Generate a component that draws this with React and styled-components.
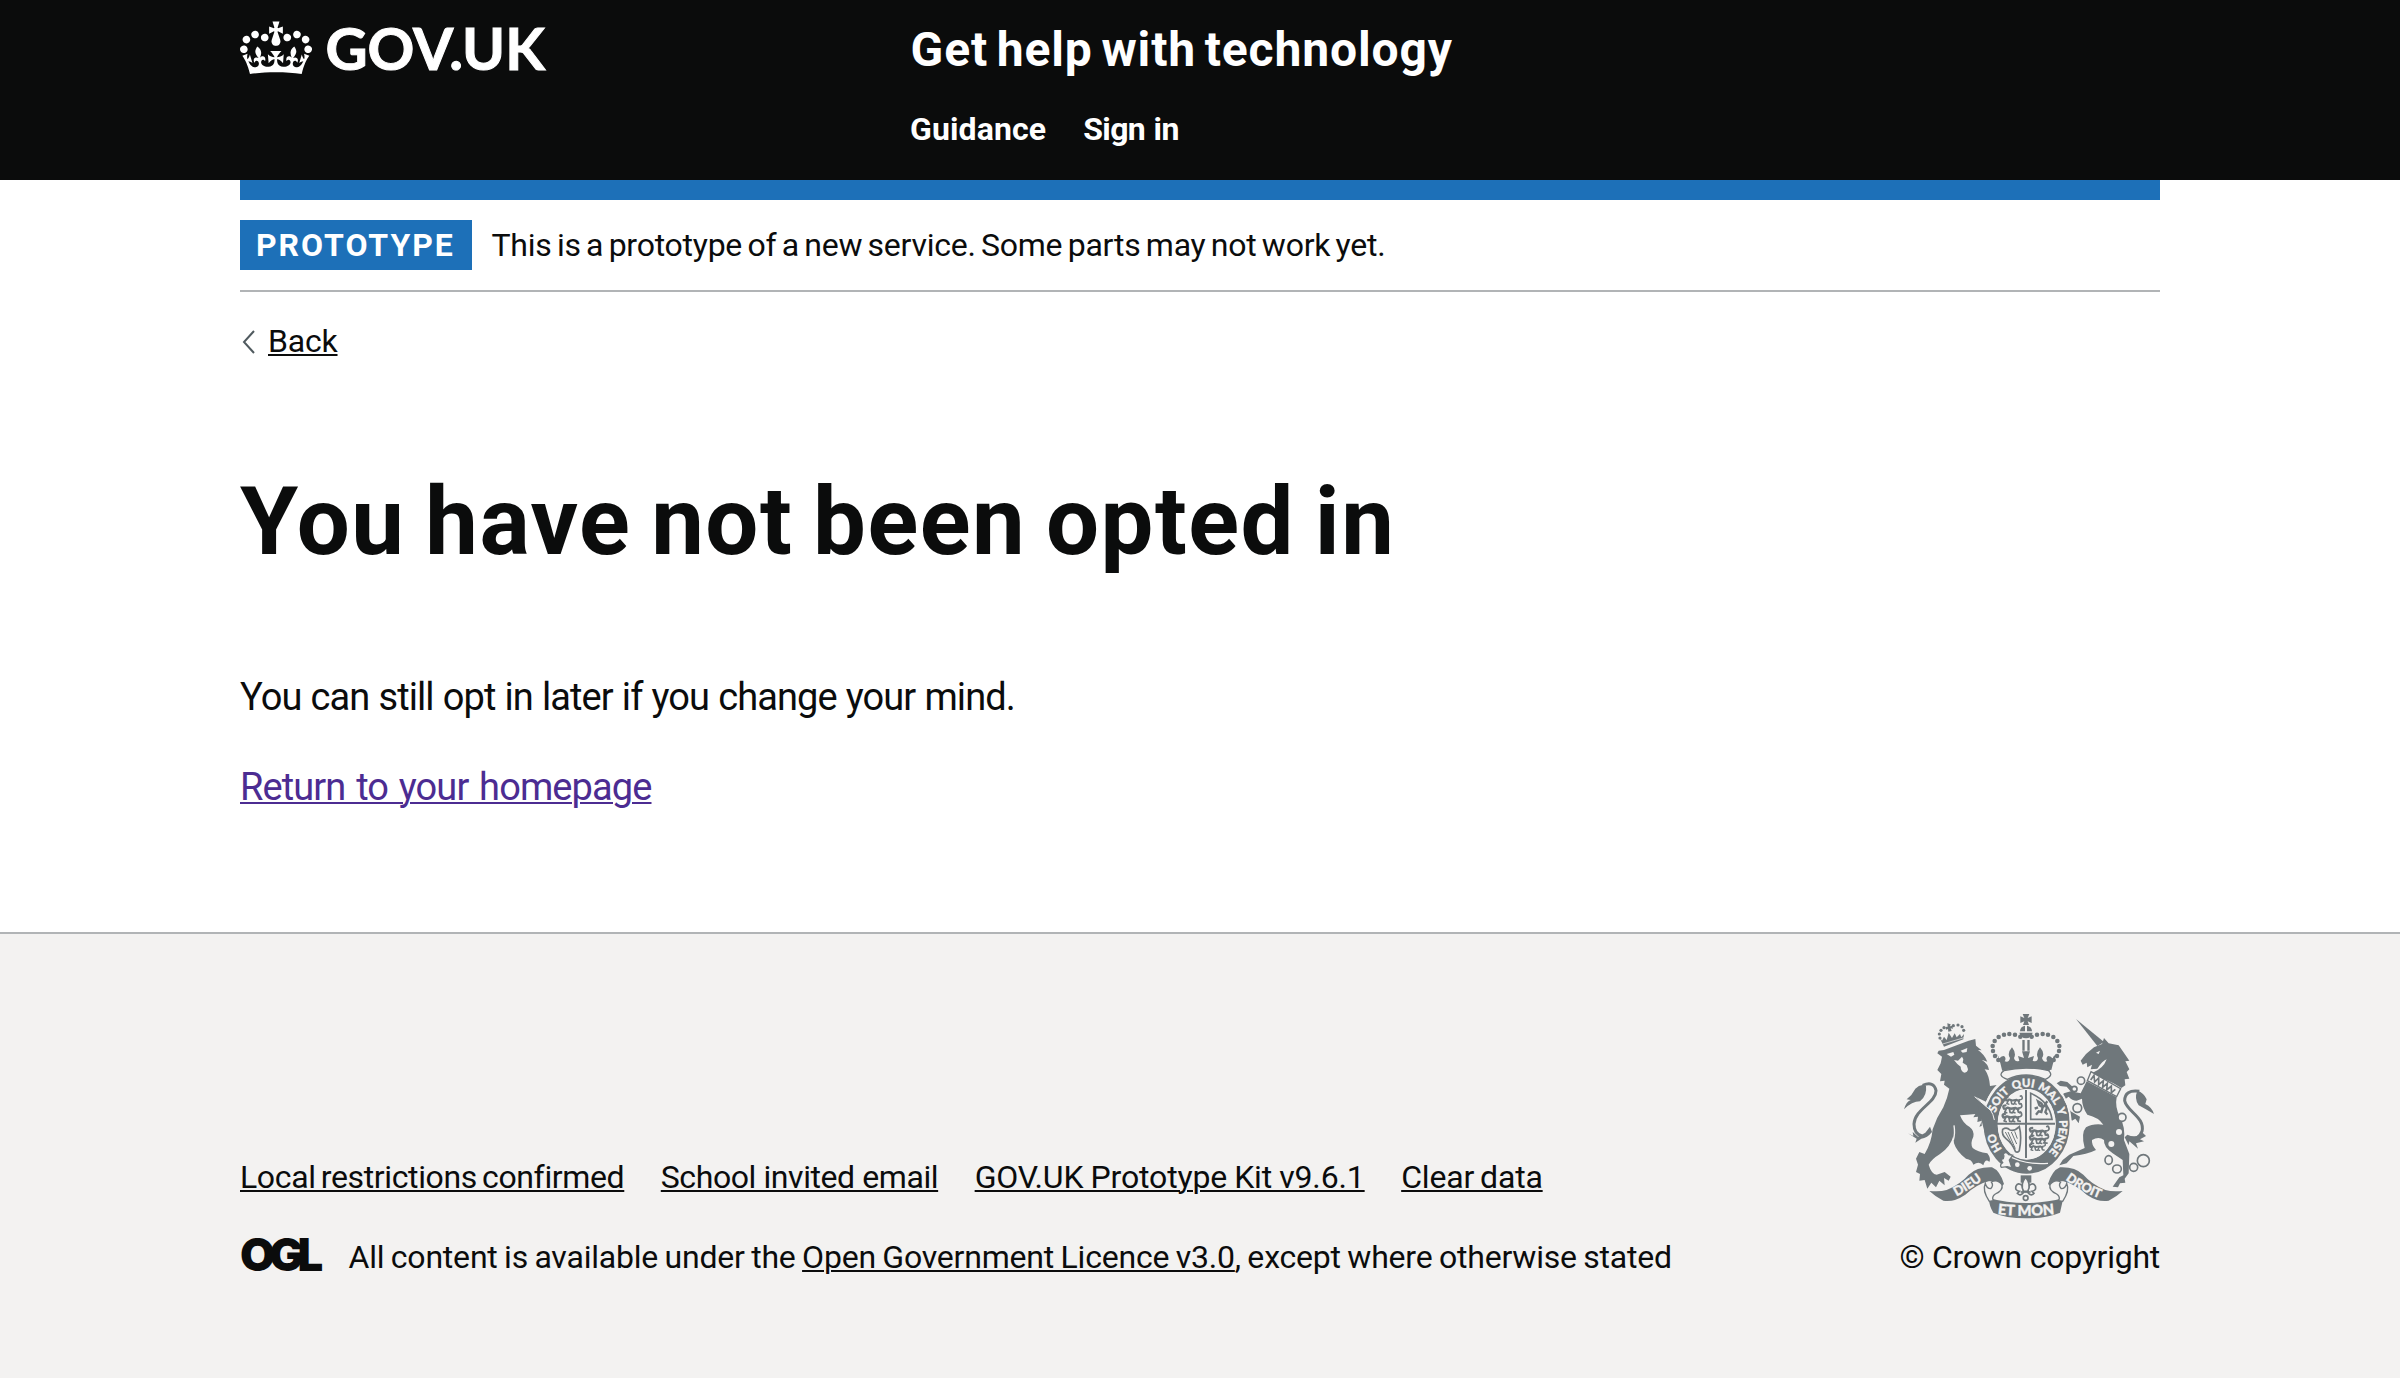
import React from "react";
import styled, { createGlobalStyle } from "styled-components";

const ink = "#0b0c0c";
const blue = "#1d70b8";
const rule = "#b1b4b6";
const paper = "#f3f2f1";
const crest = "#6f777b";

const GlobalStyle = createGlobalStyle`
  * { box-sizing: border-box; }
  body { margin: 0; background: #fff; color: ${ink}; font-family: Roboto, "Liberation Sans", sans-serif; }
  h1, p, ul { margin: 0; padding: 0; }
  ul { list-style: none; }
  a { color: inherit; }
`;

const Page = styled.div`
  min-height: 1378px;
  display: flex;
  flex-direction: column;
`;

const Container = styled.div`
  width: 1920px;
  margin: 0 auto;
`;

const Header = styled.header`
  background: ${ink};
  color: #fff;
  height: 180px;
`;

const HeaderRow = styled(Container)`
  display: grid;
  grid-template-columns: 670px 1fr;
`;

const HeaderRule = styled(Container)`
  height: 20px;
  background: ${blue};
`;

const Logo = styled.a`
  display: flex;
  align-items: flex-start;
  padding-top: 18px;
  text-decoration: none;
`;

const Crown = styled.svg`
  display: block;
  width: 72px;
  height: 60px;
`;

const LogoText = styled.span`
  margin-left: 13.5px;
  font: 700 58px/70px Lato, "Liberation Sans", sans-serif;
  letter-spacing: 0;
  -webkit-text-stroke: 1px currentColor;
  margin-top: -5px;
`;

const HeaderContent = styled.div`
  padding-top: 20px;
`;

const ServiceName = styled.a`
  display: block;
  font-size: 48px;
  font-weight: 700;
  line-height: 60px;
  letter-spacing: 0.85px;
  word-spacing: -4px;
  padding-left: 0.6px;
  text-decoration: none;
`;

const Nav = styled.ul`
  display: flex;
  gap: 37px;
  margin-top: 29px;
  font-size: 32px;
  font-weight: 700;
  line-height: 40px;
`;

const NavLink = styled.a`
  text-decoration: none;
  letter-spacing: ${(p) => p.$tracking}px;
  word-spacing: ${(p) => p.$gap || 0}px;
`;

const Banner = styled(Container)`
  display: flex;
  align-items: center;
  padding: 20px 0;
  border-bottom: 2px solid ${rule};
`;

const Tag = styled.strong`
  width: 232px;
  padding: 5px 0 5px 16px;
  background: ${blue};
  color: #fff;
  font-size: 32px;
  line-height: 40px;
  letter-spacing: 1.96px;
`;

const BannerText = styled.span`
  margin-left: 19.5px;
  font-size: 32px;
  line-height: 50px;
  letter-spacing: -0.25px;
  word-spacing: -2.3px;
`;

const BackLink = styled.a`
  display: inline-flex;
  align-items: center;
  margin-top: 29px;
  font-size: 32px;
  line-height: 40px;
  letter-spacing: -0.2px;
  text-decoration: none;

  span {
    margin-left: 12px;
    text-decoration: underline;
    text-decoration-thickness: 2px;
    text-underline-offset: 2px;
  }
`;

const Chevron = styled.svg`
  width: 16px;
  height: 26px;
  margin-top: 2px;
`;

const Title = styled.h1`
  margin-top: 109px;
  font-size: 94px;
  font-weight: 700;
  line-height: 104px;
  letter-spacing: 1.5px;
  word-spacing: -5px;
`;

const Body = styled.p`
  margin-top: ${(p) => p.$top}px;
  font-size: 38px;
  line-height: 50px;
  letter-spacing: ${(p) => p.$tracking}px;
  word-spacing: ${(p) => p.$gap}px;
`;

const TextLink = styled.a`
  color: ${(p) => p.$color || ink};
  text-decoration: underline;
  text-decoration-thickness: 2px;
  text-underline-offset: 2px;
`;

const Footer = styled.footer`
  flex: 1;
  margin-top: 120px;
  padding-top: 79px;
  background: ${paper};
  border-top: 2px solid ${rule};
`;

const FooterRow = styled(Container)`
  display: flex;
  align-items: flex-end;
  justify-content: space-between;
  font-size: 32px;
  line-height: 40px;
`;

const FooterLinks = styled.ul`
  display: flex;
  gap: 36.5px;
  margin-bottom: 40px;
`;

const FooterItem = styled.li`
  letter-spacing: ${(p) => p.$tracking}px;
  word-spacing: ${(p) => p.$gap}px;
  white-space: nowrap;
`;

const Licence = styled.div`
  display: flex;
  align-items: center;
  letter-spacing: -0.2px;
  word-spacing: -1.3px;
`;

const LicenceMark = styled.span`
  width: 108.5px;
  margin: -2px 0 2px;
  font: 900 45.5px/36px Inter, "Liberation Sans", sans-serif;
  letter-spacing: -6px;
`;

const Copyright = styled.a`
  display: flex;
  flex-direction: column;
  align-items: center;
  gap: 16px;
  text-decoration: none;
  letter-spacing: -0.26px;
`;

const Crest = styled.svg`
  display: block;
  width: 250px;
  height: 208px;
  overflow: visible;
`;

const beads = [[391, 110], [375, 104], [358, 102], [342, 104], [326, 111], [314, 123], [308, 138], [309, 153], [315, 168], [325, 180]];
const lionCrownBeads = [[150, 114], [148, 102], [153, 91], [162, 83], [190, 77], [204, 75], [216, 80], [221, 91]];

function PassantLion({ x, y, s = 1 }) {
  return (
    <g transform={`translate(${x} ${y}) scale(${s})`} fill="none" stroke={crest} strokeWidth="5" strokeLinecap="round" strokeLinejoin="round">
      <path d="M4 8q-6-10 4-10M8 8l6-3 10 3 14-2 8 4" strokeWidth="7" />
      <path d="M10 10l-4 8 6 2M20 10l2 9 6 1M34 10l-4 8 6 2M44 10l2 8 6 1M46 6q12 0 10-8t-6-4" />
    </g>
  );
}

function RoyalArms() {
  return (
    <Crest viewBox="45 39 750 624" role="img">
      <g fill={crest}>
        {/* lion */}
        <path d="M142 160L146 152 162 150 236 122 256 117 258 137 275 151 264 150Q284 164 292 185L275 179Q295 192 297 210L284 208Q298 228 300 258L320 255Q300 275 288 305L256 290 302 332Q312 350 314 372L322 392 314 400 306 384 302 404 294 388 284 398 282 376 268 380 276 362 262 366 264 350 250 352 256 342Q230 344 210 346 220 372 238 380 254 392 250 410 240 430 248 444 262 456 292 460 304 476 298 486 286 474 280 496 268 482 250 494 246 478 228 476Q200 456 192 430L190 408Q182 440 150 462 124 478 116 494 124 522 140 524L164 516 182 530 176 542 162 534 164 556 148 542 138 562 124 548 112 566 104 540 88 542 90 522 78 516 84 494 78 476 88 456 104 462Q124 430 128 388 140 352 160 322 172 296 178 266L162 254 164 242 150 244 154 222 142 210 152 190 156 170Z" />
        <path d="M42 328Q48 306 62 300L50 298Q66 286 76 266 92 250 108 258 112 286 90 304 66 304 42 328Z" />
        <path d="M54 400L70 408 68 396 84 410 106 398 120 380 126 396Q112 414 94 416L76 428 80 416Z" />
      </g>
      <path d="M98 256Q132 242 138 272C138 308 74 328 72 372Q72 402 96 408" fill="none" stroke={crest} strokeWidth="9" />
      <g fill={paper}>
        <path d="M170 162l20-6 3 8-10 6zM212 152l20-8-2 12-12 2z" />
        <path d="M192 180l12 2 12-12 4 8-2 10 12 8 4 12q-2 10-10 10-12-4-12-18l-10-8z" />
      </g>
      <path d="M192 376Q196 400 190 420" fill="none" stroke={paper} strokeWidth="4" />
      {/* lion's crown */}
      <g fill={crest}>
        {lionCrownBeads.map(([x, y]) => <circle key={y + x} cx={x} cy={y} r="4.8" />)}
        <path d="M172 70l10 3-2 6 7-2 2 9-7-1 3 8-10 2-1-8-6 2-2-8 7-1z" />
        <path d="M148 112l8 10 6-12 8 10 6-22 10 16 8-14 6 12 10-10 4 10 8-10-2 16-58 22z" />
      </g>
      <path d="M158 132l68-20" stroke={paper} strokeWidth="2" />

      {/* unicorn */}
      <g fill={crest}>
        <path d="M558 57L642 126 622 138Z" />
        <path d="M572 182L588 162 612 142 636 132 642 114 656 130 686 136 700 156 718 182 706 184 718 208 710 216 718 236 704 238 706 256 694 264 670 250 654 242 626 232 608 218Q640 206 650 178 636 184 622 206L602 208 606 194 592 202 590 188 578 194Z" />
        <path d="M590 244L680 292Q674 320 690 352 706 380 702 420L718 462 716 520 704 536 706 548 690 550 684 562 668 560 688 532 700 526 698 480 668 460Q640 440 642 420 626 408 606 420 604 434 618 450 590 464 550 468L530 490 508 496 518 480 538 464 584 444Q572 400 588 382 608 370 640 374 626 352 592 344 576 320 576 296L560 302Q546 302 536 290L522 300 542 334 570 350 566 370 556 356 546 362 530 344 514 310 504 296 522 280 542 274 572 280Z" />
        <path d="M552 286L530 260 510 258 500 250 512 242 532 246 556 268Z" />
        <path d="M792 342Q768 328 746 316 732 296 742 272 762 278 770 298L766 312Q786 322 792 342Z" />
        <path d="M704 412L716 436 718 424 744 446 738 430 762 424 750 418 768 408 758 398Q738 416 712 404Z" />
      </g>
      <path d="M748 274Q704 268 704 302C710 334 766 352 756 394Q748 416 724 418" fill="none" stroke={crest} strokeWidth="9" />
      <path d="M618 158l12-6-4 10z" fill={paper} />
      <path d="M603 215L692 266 680 290 592 242Z" fill={paper} stroke={crest} strokeWidth="4" />
      <path d="M602 240l10-14 2 20 12-12 0 20 14-12-2 20 14-12-2 20 14-12 0 20 12-10" fill="none" stroke={crest} strokeWidth="5" />
      <g fill="none" stroke={crest} strokeWidth="5">
        <circle cx="573" cy="242" r="11" />
        <circle cx="553" cy="267" r="8" fill={paper} />
        <circle cx="562" cy="324" r="13" fill={paper} />
        <circle cx="696" cy="352" r="12" fill={paper} />
        <ellipse cx="656" cy="480" rx="11" ry="13" />
        <ellipse cx="681" cy="507" rx="13" ry="12" />
        <circle cx="731" cy="502" r="12" />
        <circle cx="760" cy="482" r="18" />
      </g>
      <circle cx="687" cy="396" r="9" fill={paper} />
      <circle cx="664" cy="432" r="9" fill={paper} />

      {/* garter */}
      <ellipse cx="410" cy="373" rx="132" ry="152" fill="none" stroke={paper} strokeWidth="6" />
      <ellipse cx="410" cy="373" rx="108" ry="127" fill="none" stroke={crest} strokeWidth="42" />
      <ellipse cx="410" cy="373" rx="87" ry="105" fill={paper} />
      <path id="garter" d="M410 485A98 112 0 0 1 410 261 98 112 0 0 1 410 485" fill="none" />
      <g fill={paper} stroke={paper} strokeWidth="1" fontFamily="Lato, sans-serif" fontWeight="900" fontSize="34" textAnchor="middle">
        <text><textPath href="#garter" startOffset="17%">HO</textPath></text>
        <text><textPath href="#garter" startOffset="36%">SOIT</textPath></text>
        <text><textPath href="#garter" startOffset="48.5%">QUI</textPath></text>
        <text><textPath href="#garter" startOffset="60.5%">MAL</textPath></text>
        <text><textPath href="#garter" startOffset="69.5%">Y</textPath></text>
        <text><textPath href="#garter" startOffset="81%">PENSE</textPath></text>
      </g>
      <path d="M256 290L302 332Q314 350 314 372L324 394 314 402 306 386 302 406 294 390 284 398 272 350Z" fill={crest} />
      <path d="M254 290L302 331Q310 342 313 360" fill="none" stroke={paper} strokeWidth="3" />

      {/* shield */}
      <g fill="none" stroke={crest}>
        <path d="M408 270V474M321 371H495" strokeWidth="6" />
        <path d="M422 280V358H486Q478 304 422 280Z" strokeWidth="5" />
        <path d="M438 344l8-10 8 2 4-14-10-6-4-12 10 6 6 10 8-6 2 12-4 10 6 8M444 322l-10 4M464 314l8-10" strokeWidth="7" />
        <path d="M338 388q12-8 22 2 14 4 28-10 8 30 0 72-6 8-12 2-8-22-28-38-14-12-10-28z" strokeWidth="5" />
        <path d="M354 396l22 50M364 396l16 36M374 394l8 22M346 396l28 52" strokeWidth="3" />
      </g>
      <PassantLion x={345} y={294} s={0.92} />
      <PassantLion x={338} y={318} s={1.02} />
      <PassantLion x={336} y={344} s={1.05} />
      <PassantLion x={418} y={386} s={1.05} />
      <PassantLion x={418} y={410} s={1.02} />
      <PassantLion x={418} y={434} s={0.85} />

      {/* buckle and strap */}
      <path d="M346 462Q400 496 474 490" fill="none" stroke={paper} strokeWidth="4" />
      <path d="M340 462q8-10 16 2l12 2-10 14 8 24-14-4-18 2q-6-8 4-14-8-10 2-12 4-8 0-14z" fill={paper} stroke={crest} strokeWidth="4" />
      <circle cx="382" cy="494" r="7" fill={paper} />
      <circle cx="419" cy="505" r="7" fill={paper} />

      {/* crown */}
      <g fill={crest}>
        {beads.map(([x, y]) => (
          <React.Fragment key={x}>
            <circle cx={x} cy={y} r="6.8" />
            <circle cx={816 - x} cy={y} r="6.8" />
          </React.Fragment>
        ))}
        <path d="M398 42h20l-5 12 12-5v20l-12-5 4 11h-18l4-11-12 5V49l12 5z" />
        <path d="M390 94a18 18 0 0 1 15-17v17zM411 94V77a18 18 0 0 1 15 17zM388 98h40q-4 16-20 17-16-1-20-17z" />
        <path d="M397 120h7v32h-7zM412 120h7v32h-7z" />
        <path d="M318 164q10 4 10 14 4-10 14-10 8 6 2 16 14 4 16-10-10-14 6-32 14 18 6 32 4 14 16 8l-4-14 18 6-6-20h24l-6 20 18-6-4 14q14 6 16-8-8-14 6-32 16 18 6 32 4 14 16 10-6-10 2-16 10 0 14 10 0-10 10-14-10 26-14 46-72-12-148 0-4-22-14-46z" />
      </g>
      <path d="M352 238Q320 226 342 212 408 196 476 212 492 226 466 238Q408 212 352 238Z" fill={paper} stroke={crest} strokeWidth="4" />
      <path d="M336 200q72-14 144 0v12q-72-14-144 0z" fill={crest} />

      {/* pendant */}
      <path d="M392 526h32v22h-32z" fill={crest} />
      <g fill={paper} stroke={crest} strokeWidth="5">
        <path d="M400 578q-10 12-18 2l6-6q-14-2-10-16 6-12 18-2l4 12zM414 578q10 12 18 2l-6-6q14-2 10-16-6-12-18-2l-4 12z" />
        <path d="M407 532q-18 22-6 42h12q12-20-6-42z" />
        <circle cx="407" cy="594" r="7" />
      </g>
      <path d="M392 576h30" stroke={crest} strokeWidth="5" />

      {/* ribbon */}
      <g fill={crest}>
        <path d="M118 573Q150 576 170 570 212 552 236 524 262 500 306 502 330 512 342 552L334 560Q320 538 296 544 262 552 226 584 190 608 160 602 136 590 118 573Z" />
        <path d="M698 573Q666 576 646 570 604 552 580 524 554 500 510 502 486 512 474 552L482 560Q496 538 520 544 554 552 590 584 626 608 656 602 680 590 698 573Z" />
        <path d="M296 594Q350 609 408 609 466 609 520 594L510 638Q470 655 408 655 346 655 310 638Q298 620 296 594Z" />
      </g>
      <g fill={paper} stroke={crest} strokeWidth="4">
        <path d="M286 550Q276 572 298 604L310 602Q304 590 316 582 340 572 336 554 322 536 304 546 312 556 302 566 290 566 286 550Z" />
        <path d="M530 550Q540 572 518 604L506 602Q512 590 500 582 476 572 480 554 494 536 512 546 504 556 514 566 526 566 530 550Z" />
      </g>
      <path id="dieu" d="M182 598Q238 572 292 528" fill="none" />
      <path id="droit" d="M514 530Q572 576 642 600" fill="none" />
      <path id="mon" d="M312 641Q408 654 504 641" fill="none" />
      <g fill={paper} stroke={paper} strokeWidth="1" fontFamily="Lato, sans-serif" fontWeight="900" fontSize="39" textAnchor="middle">
        <text><textPath href="#dieu" startOffset="50%">DIEU</textPath></text>
        <text fontSize="38"><textPath href="#droit" startOffset="50%">DROIT</textPath></text>
        <text fontSize="44"><textPath href="#mon" startOffset="50%">ET MON</textPath></text>
      </g>
    </Crest>
  );
}

const footerLinks = [
  { text: "Local restrictions confirmed", tracking: -0.36, gap: -2.5 },
  { text: "School invited email", tracking: -0.42, gap: 0 },
  { text: "GOV.UK Prototype Kit v9.6.1", tracking: -0.136, gap: -0.77 },
  { text: "Clear data", tracking: -0.19, gap: -1.7 },
];

export default function App() {
  return (
    <Page>
      <GlobalStyle />
      <Header>
        <HeaderRow>
          <Logo>
            <Crown viewBox="0 0 132 97">
              <path
                fill="currentColor"
                fillRule="evenodd"
                d="M25 30.2c3.5 1.5 7.7-.2 9.1-3.7 1.5-3.6-.2-7.8-3.9-9.2-3.6-1.4-7.6.3-9.1 3.9-1.4 3.5.3 7.5 3.9 9zM9 39.5c3.6 1.5 7.8-.2 9.2-3.7 1.5-3.6-.2-7.8-3.9-9.1-3.6-1.5-7.6.2-9.1 3.8-1.4 3.5.3 7.5 3.8 9zM4.4 57.2c3.5 1.5 7.7-.2 9.1-3.8 1.5-3.6-.2-7.7-3.9-9.1-3.5-1.5-7.6.3-9.1 3.8-1.4 3.5.3 7.6 3.9 9.1zm38.3-21.4c3.5 1.5 7.7-.2 9.1-3.8 1.5-3.6-.2-7.7-3.9-9.1-3.6-1.5-7.6.3-9.1 3.8-1.3 3.6.4 7.7 3.9 9.1zm64.4-5.6c-3.6 1.5-7.8-.2-9.1-3.7-1.5-3.6.2-7.8 3.8-9.2 3.6-1.4 7.7.3 9.2 3.9 1.3 3.5-.4 7.5-3.9 9zm15.9 9.3c-3.6 1.5-7.7-.2-9.1-3.7-1.5-3.6.2-7.8 3.7-9.1 3.6-1.5 7.7.2 9.2 3.8 1.5 3.5-.3 7.5-3.8 9zm4.7 17.7c-3.6 1.5-7.8-.2-9.2-3.8-1.5-3.6.2-7.7 3.9-9.1 3.6-1.5 7.7.3 9.2 3.8 1.3 3.5-.4 7.6-3.9 9.1zM89.3 35.8c-3.6 1.5-7.8-.2-9.2-3.8-1.4-3.6.2-7.7 3.9-9.1 3.6-1.5 7.7.3 9.2 3.8 1.4 3.6-.3 7.7-3.9 9.1zM69.7 17.7l8.9 4.7V9.3l-8.9 2.8c-.2-.3-.5-.6-.9-.9L72.4 0H59.6l3.5 11.2c-.3.3-.6.5-.9.9l-8.8-2.8v13.1l8.8-4.7c.3.3.6.7.9.9l-5 15.4v.1c-.2.8-.4 1.6-.4 2.4 0 4.1 3.1 7.5 7 8.1h.2c.3 0 .7.1 1 .1.4 0 .7 0 1-.1h.2c4-.6 7.1-4.1 7.1-8.1 0-.8-.1-1.7-.4-2.4V34l-5.1-15.4c.4-.2.7-.6 1-.9zM66 92.8c16.9 0 32.8 1.1 47.1 3.2 4-16.9 8.9-26.7 14-33.5l-9.6-3.4c1 4.9 1.1 7.2 0 10.2-1.5-1.4-3-4.3-4.2-8.7L108.6 76c2.8-2 5-3.2 7.5-3.3-4.4 9.4-10 11.9-13.6 11.2-4.3-.8-6.3-4.6-5.6-7.9 1-4.7 5.7-5.9 8-.5 4.3-8.7-3-11.4-7.6-8.8 7.1-7.2 7.9-13.5 2.1-21.1-8 6.1-8.1 12.3-4.5 20.8-4.7-5.4-12.1-2.5-9.5 6.2 3.4-5.2 7.9-2 7.2 3.1-.6 4.3-6.4 7.8-13.5 7.2-10.3-.9-10.9-8-11.2-13.8 2.5-.5 7.1 1.8 11 7.3L80.2 60c-4.1 4.4-8 5.3-12.3 5.4 1.4-4.4 8-11.6 8-11.6H55.5s6.4 7.2 7.9 11.6c-4.2-.1-8-1-12.3-5.4l1.4 16.4c3.9-5.5 8.5-7.7 10.9-7.3-.3 5.8-.9 12.8-11.1 13.8-7.2.6-12.9-2.9-13.5-7.2-.7-5 3.8-8.3 7.1-3.1 2.7-8.7-4.6-11.6-9.4-6.2 3.7-8.5 3.6-14.7-4.6-20.8-5.8 7.6-5 13.9 2.2 21.1-4.7-2.6-11.9.1-7.7 8.8 2.3-5.5 7.1-4.2 8.1.5.7 3.3-1.3 7.1-5.7 7.9-3.5.7-9-1.8-13.5-11.2 2.5.1 4.7 1.3 7.5 3.3l-4.7-15.4c-1.2 4.4-2.7 7.2-4.3 8.7-1.1-3-.9-5.3 0-10.2l-9.5 3.4c5 6.9 9.9 16.7 14 33.5 14.8-2.1 30.8-3.2 47.7-3.2z"
              />
            </Crown>
            <LogoText>GOV.UK</LogoText>
          </Logo>
          <HeaderContent>
            <ServiceName>Get help with technology</ServiceName>
            <Nav>
              <li><NavLink $tracking={0.12}>Guidance</NavLink></li>
              <li><NavLink $tracking={-0.6} $gap={1}>Sign in</NavLink></li>
            </Nav>
          </HeaderContent>
        </HeaderRow>
      </Header>
      <HeaderRule />
      <Banner>
        <Tag>PROTOTYPE</Tag>
        <BannerText>This is a prototype of a new service. Some parts may not work yet.</BannerText>
      </Banner>
      <Container as="main">
        <BackLink>
          <Chevron viewBox="0 0 16 26">
            <path d="M14 2L4 13 14 24" fill="none" stroke="#505a5f" strokeWidth="2" />
          </Chevron>
          <span>Back</span>
        </BackLink>
        <Title>You have not been opted in</Title>
        <Body $top={98} $tracking={-0.9} $gap={0.5}>You can still opt in later if you change your mind.</Body>
        <Body $top={40} $tracking={-0.9} $gap={2.2}>
          <TextLink $color="#4c2c92">Return to your homepage</TextLink>
        </Body>
      </Container>
      <Footer>
        <FooterRow>
          <div>
            <FooterLinks>
              {footerLinks.map((link) => (
                <FooterItem key={link.text} $tracking={link.tracking} $gap={link.gap}>
                  <TextLink>{link.text}</TextLink>
                </FooterItem>
              ))}
            </FooterLinks>
            <Licence>
              <LicenceMark>OGL</LicenceMark>
              <span>
                All content is available under the <TextLink>Open Government Licence v3.0</TextLink>, except where otherwise stated
              </span>
            </Licence>
          </div>
          <Copyright>
            <RoyalArms />
            <span>© Crown copyright</span>
          </Copyright>
        </FooterRow>
      </Footer>
    </Page>
  );
}
